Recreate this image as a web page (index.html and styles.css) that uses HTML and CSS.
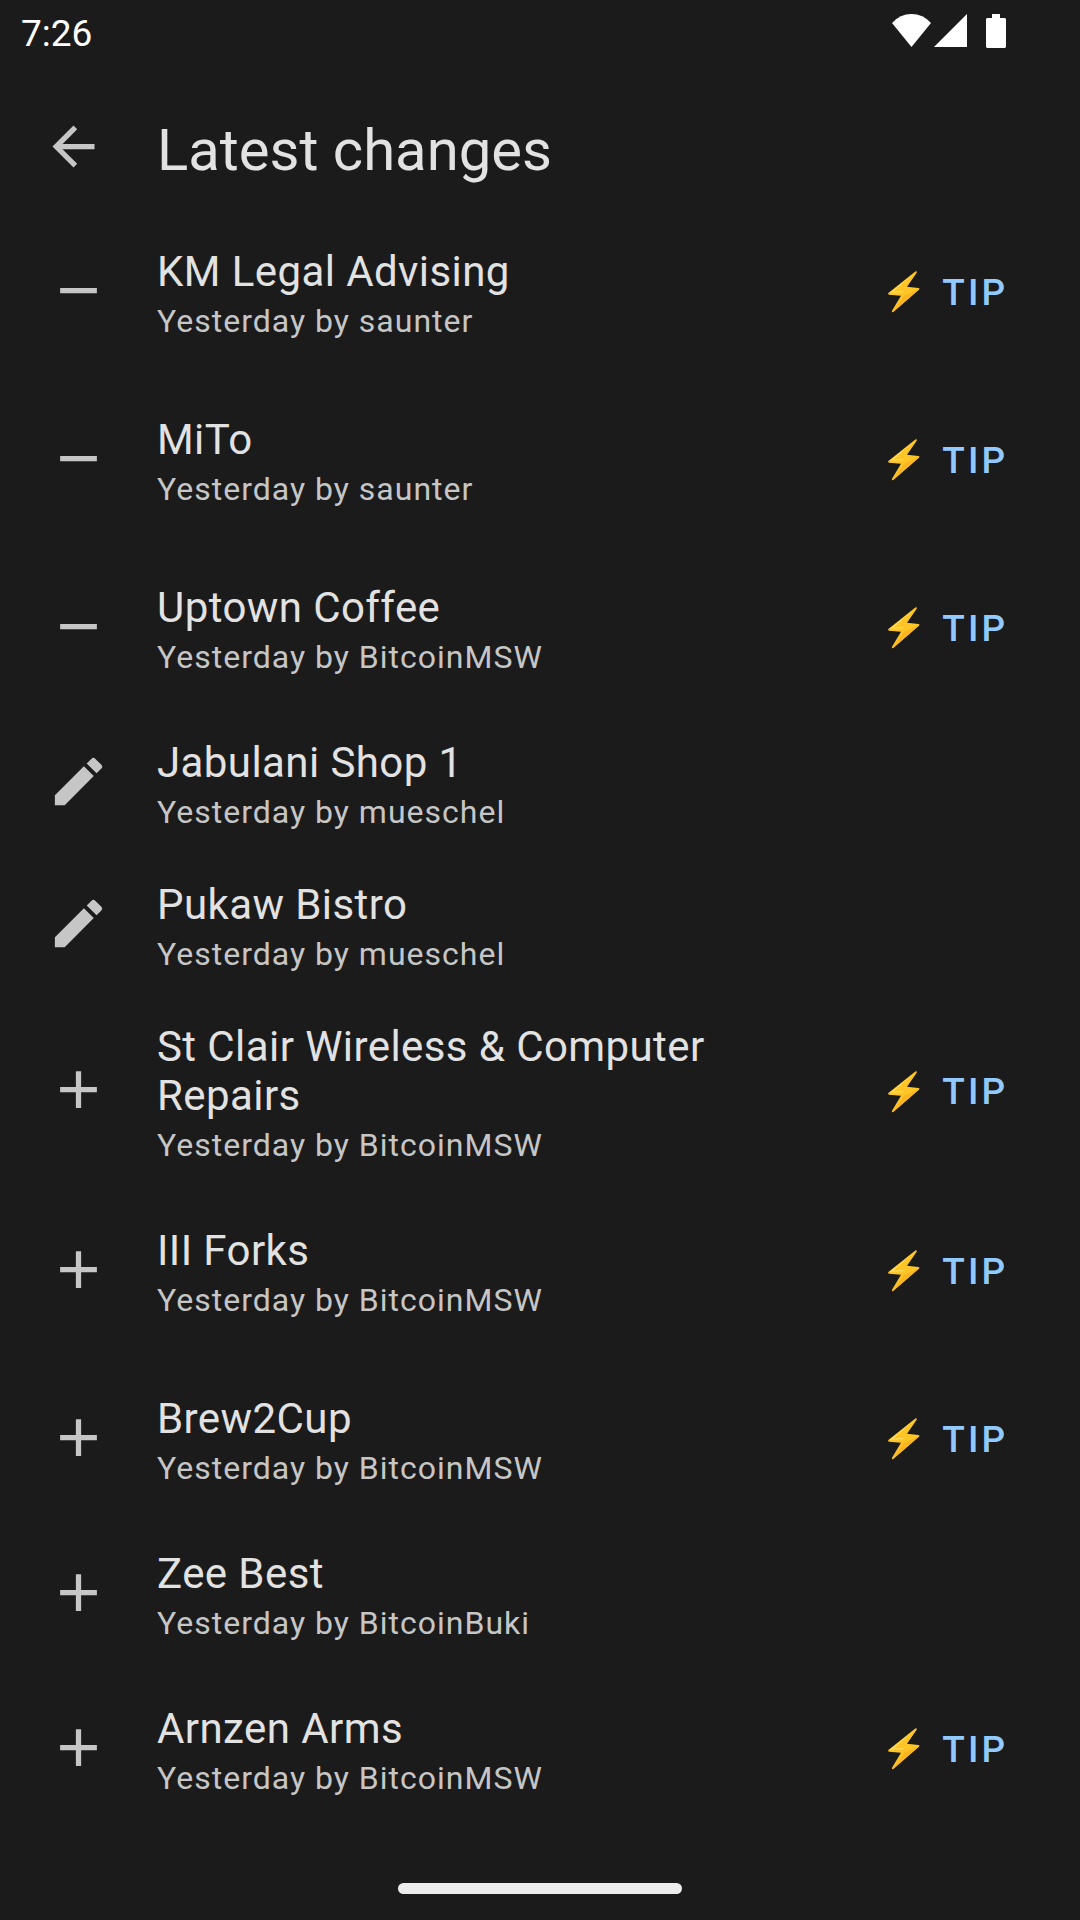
FILE: index.html
```html
<!DOCTYPE html>
<html lang="en">
<head>
<meta charset="utf-8">
<meta name="viewport" content="width=device-width, initial-scale=1">
<title>Latest changes</title>
<link rel="stylesheet" href="styles.css">
</head>
<body>
<svg class="sprite" aria-hidden="true">
  <symbol id="back" viewBox="0 0 24 24"><path d="M20 11H7.83l5.59-5.59L12 4l-8 8 8 8 1.41-1.41L7.83 13H20z"/></symbol>
  <symbol id="remove" viewBox="0 0 24 24"><path d="M19 13H5v-2h14z"/></symbol>
  <symbol id="add" viewBox="0 0 24 24"><path d="M19 13h-6v6h-2v-6H5v-2h6V5h2v6h6z"/></symbol>
  <symbol id="edit" viewBox="0 0 24 24"><path d="M3 17.25V21h3.75L17.81 9.94l-3.75-3.75zM20.71 7.04a1 1 0 0 0 0-1.41l-2.34-2.34a1 1 0 0 0-1.41 0l-1.83 1.83 3.75 3.75z"/></symbol>
  <symbol id="bolt" viewBox="0 0 96 126"><path fill="#ffc526" d="M83 1 1 66Q-1 70 3 71L39 74 12 119Q11 125 16 123L93 56Q96 51 91 51L57 47 86 5Q87 0 83 1Z"/><path fill="#ffe36a" d="M81 5 6 65 48 63 44 60 15 62Z"/><path fill="#f3a51c" d="M48 74 14 122 93 54Z" opacity=".45"/></symbol>
</svg>
<div class="screen">
  <div class="status">
    <span class="clock">7:26</span>
    <svg class="wifi" viewBox="0 0 39 33" aria-hidden="true"><path d="M0 9Q8 0 19.500 0T39 9L19.500 33Z"/></svg>
    <svg class="signal" viewBox="0 0 33 33" aria-hidden="true"><path d="M33 0V33H0Z"/></svg>
    <svg class="battery" viewBox="0 0 20 34" aria-hidden="true"><path d="M6 0h8v4h5l1 1v28l-1 1H1l-1-1V5l1-1h5z"/></svg>
  </div>
  <header class="toolbar">
    <button class="back" type="button" aria-label="Back"><svg class="icon"><use href="#back"/></svg></button>
    <h1 class="heading">Latest changes</h1>
  </header>
  <main>
    <ul class="list">
      <li class="row"><svg class="icon"><use href="#remove"/></svg><div class="text"><h2 class="name">KM Legal Advising</h2><p class="meta">Yesterday by saunter</p></div><button class="tip" type="button"><svg class="bolt"><use href="#bolt"/></svg>TIP</button></li>
      <li class="row"><svg class="icon"><use href="#remove"/></svg><div class="text"><h2 class="name">MiTo</h2><p class="meta">Yesterday by saunter</p></div><button class="tip" type="button"><svg class="bolt"><use href="#bolt"/></svg>TIP</button></li>
      <li class="row"><svg class="icon"><use href="#remove"/></svg><div class="text"><h2 class="name">Uptown Coffee</h2><p class="meta">Yesterday by BitcoinMSW</p></div><button class="tip" type="button"><svg class="bolt"><use href="#bolt"/></svg>TIP</button></li>
      <li class="row"><svg class="icon"><use href="#edit"/></svg><div class="text"><h2 class="name">Jabulani Shop 1</h2><p class="meta">Yesterday by mueschel</p></div></li>
      <li class="row"><svg class="icon"><use href="#edit"/></svg><div class="text"><h2 class="name">Pukaw Bistro</h2><p class="meta">Yesterday by mueschel</p></div></li>
      <li class="row"><svg class="icon"><use href="#add"/></svg><div class="text"><h2 class="name">St Clair Wireless &amp; Computer Repairs</h2><p class="meta">Yesterday by BitcoinMSW</p></div><button class="tip" type="button"><svg class="bolt"><use href="#bolt"/></svg>TIP</button></li>
      <li class="row"><svg class="icon"><use href="#add"/></svg><div class="text"><h2 class="name">III Forks</h2><p class="meta">Yesterday by BitcoinMSW</p></div><button class="tip" type="button"><svg class="bolt"><use href="#bolt"/></svg>TIP</button></li>
      <li class="row"><svg class="icon"><use href="#add"/></svg><div class="text"><h2 class="name">Brew2Cup</h2><p class="meta">Yesterday by BitcoinMSW</p></div><button class="tip" type="button"><svg class="bolt"><use href="#bolt"/></svg>TIP</button></li>
      <li class="row"><svg class="icon"><use href="#add"/></svg><div class="text"><h2 class="name">Zee Best</h2><p class="meta">Yesterday by BitcoinBuki</p></div></li>
      <li class="row"><svg class="icon"><use href="#add"/></svg><div class="text"><h2 class="name">Arnzen Arms</h2><p class="meta">Yesterday by BitcoinMSW</p></div><button class="tip" type="button"><svg class="bolt"><use href="#bolt"/></svg>TIP</button></li>
    </ul>
  </main>
  <div class="nav"><span class="handle"></span></div>
</div>
</body>
</html>
```
FILE: styles.css
```css
* { box-sizing: border-box; }
body {
  margin: 0;
  background: #1b1b1b;
  color: #e2e2e2;
  font-family: Roboto, "Noto Sans", sans-serif;
}
h1, h2, p, ul { margin: 0; padding: 0; font-weight: 400; }
button {
  border: 0;
  padding: 0;
  background: none;
  color: inherit;
  font: inherit;
  cursor: pointer;
}
svg { display: block; flex: none; }
.sprite { display: none; }
.screen {
  display: flex;
  flex-direction: column;
  min-height: 100vh;
}
.status {
  display: flex;
  align-items: center;
  height: 63px;
  padding: 0 74px 2px 21px;
  color: #fff;
  fill: #fff;
}
.clock { margin-right: auto; font-size: 37px; line-height: 43px; padding-top: 6px; }
.wifi { width: 39px; height: 33px; }
.signal { width: 33px; height: 33px; margin-left: 3px; }
.battery { width: 20px; height: 34px; margin-left: 19px; }
.icon { width: 63px; height: 63px; fill: #c6c6c6; }
.toolbar {
  display: flex;
  align-items: flex-start;
  gap: 52px;
  padding: 52px 42px 21px;
}
.heading { font-size: 58px; line-height: 70px; }
.list { list-style: none; }
.row {
  display: flex;
  align-items: center;
  padding: 21px 42px 21px 47px;
}
.text { flex: 1; min-width: 0; padding-top: 7px; margin: 0 32px 0 47px; }
.name { font-size: 42px; line-height: 49px; letter-spacing: 0.01em; }
.meta {
  margin-top: 6px;
  color: #c6c6c6;
  font-size: 32px;
  line-height: 38px;
  letter-spacing: 1px;
}
.tip {
  display: flex;
  align-items: center;
  gap: 22px;
  height: 126px;
  padding: 4px 30px 0 31px;
  color: #90caff;
  font-size: 37px;
  font-weight: 500;
  line-height: 43px;
  letter-spacing: 3px;
}
.bolt { width: 32px; height: 42px; }
.nav {
  display: flex;
  justify-content: center;
  margin-top: auto;
  padding: 20px 0 26px;
}
.handle { width: 284px; height: 11px; border-radius: 6px; background: #ececec; }
```
